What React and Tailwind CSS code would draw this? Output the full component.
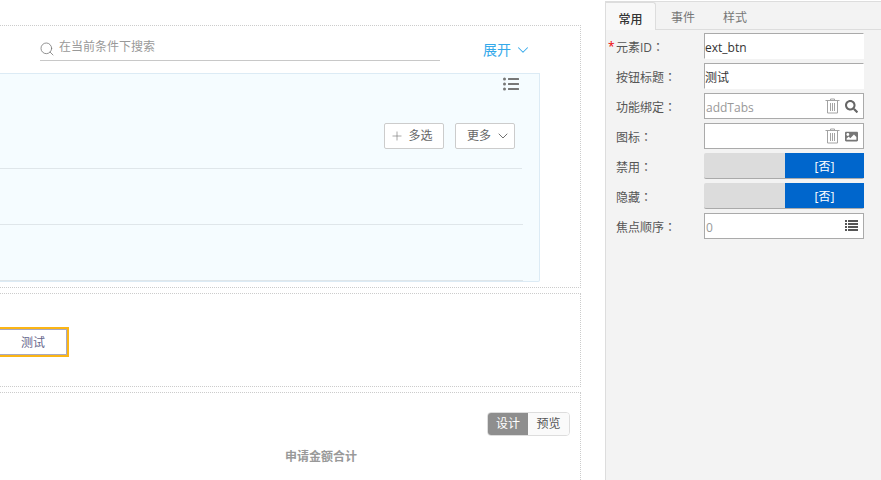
import { ChevronDown, Plus, Search } from "lucide-react";
import { FaImage, FaListUl, FaSearch } from "react-icons/fa";

const TrashIcon = () => (
	<svg width="15" height="16" viewBox="0 0 15 16" fill="none" stroke="#a3a3a3" strokeWidth="1">
		<path d="M0.5 2.5h14M5.5 2.5v-1.5h4v1.5M2.5 2.5v12.5h10v-12.5M5.5 5v8M7.5 5v8M9.5 5v8" />
	</svg>
);

// dense list icon on the focus order field
const DenseListIcon = () => (
	<svg width="13" height="12" viewBox="0 0 13 12" fill="#555">
		<path d="M0 0h2v2H0zM3 0h10v2H3zM0 3h2v2H0zM3 3h10v2H3zM0 6h2v2H0zM3 6h10v2H3zM0 9h2v2H0zM3 9h10v2H3z" />
	</svg>
);

const Label = ({ text, required }) => (
	<div className="relative w-[97px] pl-[9px] pt-[3px] text-[12px] text-[#555]">
		{required && <span className="absolute left-[1px] top-[3px] text-[#e00]">*</span>}
		{text}
		<span className="font-['Noto_Sans_CJK_TC']">：</span>
	</div>
);

const InputRow = ({ label, required, value, muted, inset, children }) => (
	<div className="flex items-center h-[30px]">
		<Label text={label} required={required} />
		<div
			className={`flex items-center justify-between w-[160px] h-[26px] bg-white pr-[5px] text-[12px] border ${
				inset ? "pl-0 border-white border-t-[#aaa] border-l-[#aaa]" : "pl-[1px] border-[#aaa]"
			} ${muted ? "text-[#999]" : "text-[#333]"}`}>
			<span className="pt-[3px]">{value}</span>
			<div className="flex items-center gap-[5px]">{children}</div>
		</div>
	</div>
);

const SwitchRow = ({ label }) => (
	<div className="flex items-center h-[30px]">
		<Label text={label} />
		<div className="flex w-[160px] h-[26px] bg-[#dcdcdc] border-b border-[#aaa] rounded-[2px]">
			<div className="w-[81px]" />
			<div className="flex-1 flex items-center justify-center pt-[3px] bg-[#0066cc] text-white text-[12px]">[否]</div>
		</div>
	</div>
);

export default function App() {
	return (
		<div
			className="flex w-[881px] h-[480px] overflow-hidden bg-white"
			style={{ fontFamily: '"Open Sans", "Noto Sans CJK SC", sans-serif' }}>
			{/* canvas */}
			<div className="w-[605px] shrink-0 pt-[25px]">
				<div className="w-[581px] h-[263px] border-t border-r border-b border-dotted border-[#ccc] flex flex-col">
					<div className="flex items-start h-[47px] pt-[11px] pl-[40px]">
						<div className="flex items-center gap-[4px] w-[400px] h-[24px] border-b border-[#c8c8c8] pb-[3px] text-[12px] text-[#999]">
							<Search size={16} strokeWidth={1.2} className="text-[#777] mt-[3px] -ml-[1px]" />
							<span>在当前条件下搜索</span>
						</div>
						<div className="flex items-center gap-[3px] ml-[43px] mt-[2px] text-[14px] text-[#35a9ea]">
							展开
							<ChevronDown size={18} strokeWidth={1.4} />
						</div>
					</div>
					<div className="w-[540px] h-[209px] bg-[#f5fcff] border-t border-r border-b border-[#dcebf5] rounded-br-[2px] flex flex-col">
						<div className="flex justify-end pr-[20px] pt-[2px] h-[49px]">
							<FaListUl size={16} className="text-[#777]" />
						</div>
						<div className="flex justify-end gap-[11px] pr-[24px] h-[45px]">
							<div className="flex items-center justify-center gap-[4px] w-[60px] h-[26px] pr-[5px] bg-white border border-[#ccc] rounded-[2px] text-[12px] text-[#666]">
								<Plus size={14} strokeWidth={1.1} className="text-[#777]" />
								多选
							</div>
							<div className="flex items-center justify-center gap-[4px] w-[60px] h-[26px] pl-[6px] bg-white border border-[#ccc] rounded-[2px] text-[12px] text-[#666]">
								更多
								<ChevronDown size={16} strokeWidth={1.4} className="-mr-[2px]" />
							</div>
						</div>
						<div className="w-[522px] h-[56px] border-t border-[#dfe6ea]" />
						<div className="w-[523px] h-[57px] border-t border-b border-[#dfe6ea]" />
					</div>
				</div>
				<div className="w-[581px] h-[94px] mt-[5px] border-t border-r border-b border-dotted border-[#ccc] flex items-center">
					<div className="w-[69px] h-[30px] mt-[3px] border-2 border-l-0 border-[#fbb515]">
						<div className="flex items-center justify-end pr-[21px] pt-[3px] h-full bg-white border border-l-0 border-[#a8a8c0] text-[12px] text-[#66668c]">
							测试
						</div>
					</div>
				</div>
				<div className="w-[581px] h-[100px] mt-[5px] border-t border-r border-dotted border-[#ccc] flex flex-col items-end pr-[10px] pt-[19px]">
					<div className="flex w-[83px] h-[24px] border border-[#ddd] rounded-[4px] overflow-hidden text-[12px]">
						<div className="flex items-center justify-center w-[40px] bg-[#8e8e8e] text-white">设计</div>
						<div className="flex-1 flex items-center justify-center bg-[#fafafa] text-[#555]">预览</div>
					</div>
					<div className="w-full mt-[12px] pl-[285px] text-[12px] font-bold text-[#999]">申请金额合计</div>
				</div>
			</div>

			{/* properties panel */}
			<div className="flex-1 flex flex-col bg-[#f3f3f3] border-l border-t border-[#ddd] mt-[1px]">
				<div className="flex items-end h-[28px] border-b border-[#ddd] text-[12px]">
					<div className="flex items-center justify-center w-[50px] h-[28px] pt-[6px] -mb-px bg-[#f8f8f8] border border-b-0 border-l-0 border-[#ddd] rounded-tr-[3px] font-medium text-[#333]">
						常用
					</div>
					<div className="flex items-center justify-center w-[52px] h-[27px] pt-[5px] pl-[2px] text-[#777]">事件</div>
					<div className="flex items-center justify-center w-[52px] h-[27px] pt-[5px] pl-[2px] text-[#777]">样式</div>
				</div>
				<div className="flex flex-col pt-[1px] pl-[1px]">
					<InputRow label="元素ID" required value="ext_btn" inset />
					<InputRow label="按钮标题" value="测试" inset />
					<InputRow label="功能绑定" value="addTabs" muted>
						<TrashIcon />
						<FaSearch size={13} className="text-[#666]" />
					</InputRow>
					<InputRow label="图标" value="">
						<TrashIcon />
						<FaImage size={13} className="text-[#777]" />
					</InputRow>
					<SwitchRow label="禁用" />
					<SwitchRow label="隐藏" />
					<InputRow label="焦点顺序" value="0" muted>
						<DenseListIcon />
					</InputRow>
				</div>
			</div>
		</div>
	);
}
